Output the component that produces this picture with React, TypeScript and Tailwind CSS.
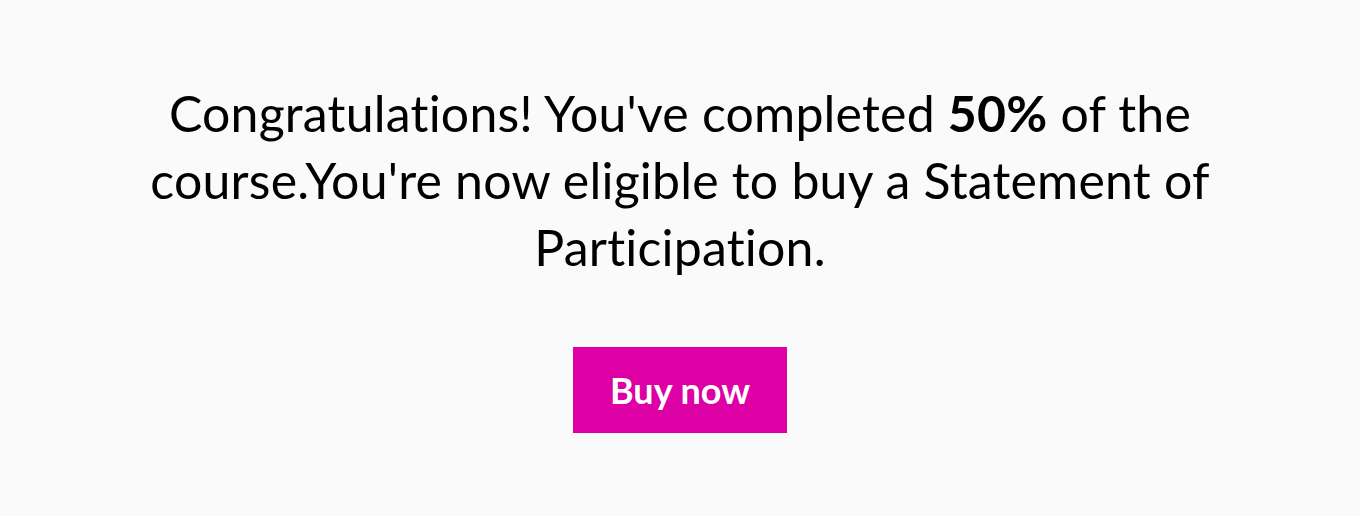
export default function App() {
  return (
    <div className="w-full h-[516px] bg-[#fafafa] flex flex-col items-center pt-[80px] font-['Lato',sans-serif] [font-variant-ligatures:none]">
      <p className="w-[1100px] text-center text-[50px] leading-[67px] tracking-[0.2px] text-black">
        Congratulations! You've completed <strong className="font-bold">50%</strong> of the course.You're now eligible to buy a Statement of Participation.
      </p>
      <button className="mt-[66px] w-[214px] h-[86px] bg-[#dc00a5] text-white text-[36px] font-bold">
        Buy now
      </button>
    </div>
  )
}
